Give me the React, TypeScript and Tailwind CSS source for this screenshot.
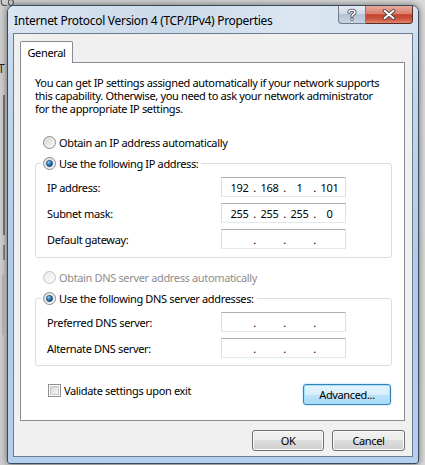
import React from "react";

function Radio({ checked, disabled }: { checked?: boolean; disabled?: boolean }) {
  const id = checked ? "c" : disabled ? "d" : "n";
  return (
    <svg width="13" height="13" viewBox="0 0 13 13" className="shrink-0">
      <defs>
        <linearGradient id={`rb-${id}`} x1="0" y1="0" x2="1" y2="1">
          <stop offset="0" stopColor={disabled ? "#e6e6e6" : "#cfcfcf"} />
          <stop offset="1" stopColor="#ffffff" />
        </linearGradient>
        <radialGradient id={`rd-${id}`} cx="0.35" cy="0.3" r="0.8">
          <stop offset="0" stopColor="#9fd4f5" />
          <stop offset="0.45" stopColor="#2f7fc4" />
          <stop offset="1" stopColor="#0e3c6b" />
        </radialGradient>
      </defs>
      <circle cx="6.5" cy="6.5" r="6" fill={`url(#rb-${id})`} stroke={disabled ? "#c2c2c2" : "#8a8a8a"} strokeWidth="1" />
      <circle cx="6.5" cy="6.5" r="4.6" fill="none" stroke={disabled ? "#f0f0f0" : "#f4f4f4"} strokeWidth="0.8" opacity="0.7" />
      {checked && <circle cx="6.5" cy="6.5" r="3.1" fill={`url(#rd-${id})`} stroke="#163e66" strokeWidth="0.7" />}
    </svg>
  );
}

function Checkbox() {
  return (
    <div className="flex h-[13px] w-[13px] shrink-0 items-center justify-center border border-[#8e8f8f] bg-white">
      <div className="h-[9px] w-[9px] border border-[#c8c8c8] bg-[linear-gradient(135deg,#d6d6d6,#f6f6f6)]" />
    </div>
  );
}

function IpBox({ v }: { v: string[] }) {
  return (
    <div className="flex h-[20px] w-[125px] items-center border border-[#dbdfe6] border-t-[#abadb3] border-b-[#e3e9ef] bg-white pl-[4px]">
      {v.map((s, i) => (
        <React.Fragment key={i}>
          <span className="w-[27px] text-center">{s}</span>
          {i < 3 && <span className="w-[3px] text-center">.</span>}
        </React.Fragment>
      ))}
    </div>
  );
}

function Row({ label, v }: { label: string; v: string[] }) {
  return (
    <div className="flex h-[20px] items-center pl-[11px]">
      <span className="w-[174px]">{label}</span>
      <IpBox v={v} />
    </div>
  );
}

function WinButton({ children, w, def }: { children: React.ReactNode; w: string; def?: boolean }) {
  return (
    <div
      className={
        def
          ? `${w} flex h-[21px] items-center justify-center rounded-[3px] border border-[#3c7fb1] bg-[linear-gradient(to_bottom,#e5f4fc_0%,#d6eefb_50%,#bde4f8_50%,#a9daf5_100%)] shadow-[inset_0_0_0_1px_#9ee3ff,0_0_2px_#7fd0ff]`
          : `${w} flex h-[21px] items-center justify-center rounded-[3px] border border-[#707070] bg-[linear-gradient(to_bottom,#f2f2f2_0%,#ebebeb_50%,#dddddd_50%,#cfcfcf_100%)] shadow-[inset_0_0_0_1px_#fbfbfb]`
      }
    >
      {children}
    </div>
  );
}

export default function App() {
  return (
    <div className="relative h-[465px] w-[425px] overflow-hidden whitespace-nowrap bg-[linear-gradient(to_right,#cfcfcf,#dadada)] font-['Noto_Sans',sans-serif] text-[11px] leading-[13px] tracking-[-0.35px] text-black">
      <div className="absolute left-0 top-[-5px] text-[12px] text-[#555] blur-[0.6px]">Co</div>
      <div className="absolute left-[-2px] top-[62px] text-[12px] text-[#222]">T</div>
      <div className="absolute left-[3px] top-[95px] h-[140px] w-[2px] border border-[#777]" />
      <div className="absolute left-[3px] top-[245px] h-[15px] w-[2px] border border-[#888]" />
      <div className="absolute left-[2px] top-[275px] h-[60px] w-[2px] border border-[#bbb]" />

      <div className="relative ml-[7px] mt-[5px] flex h-[459px] w-[412px] flex-col rounded-t-[7px] rounded-b-[3px] border border-[#3b4a5c] bg-[linear-gradient(to_bottom,#d3e1f0_0%,#c1d6ec_20%,#aecbea_60%,#b4d0ee_100%)] shadow-[0_0_7px_rgba(0,0,0,0.55)]">
        <div className="flex h-[27px] rounded-t-[6px] bg-[linear-gradient(to_right,#d9e5f1,#cbdaea_40%,#dbe6f2_70%,#d3e0ee)]">
          <div className="flex flex-1 items-center pl-[6px] pt-[1px] text-[12px] tracking-[-0.3px]">Internet Protocol Version 4 (TCP/IPv4) Properties</div>
          <div className="mr-[5px] flex h-[18px] self-start">
            <div className="flex w-[28px] items-center justify-center rounded-bl-[4px] border border-t-0 border-[#6e7b8b] bg-[linear-gradient(to_bottom,#e3eaf2_0%,#d0dbe7_45%,#b4c3d3_50%,#c6d4e2_100%)]">
              <svg width="12" height="13" viewBox="0 0 12 13">
                <path d="M3 4.2 C3 1.6 9 1.6 9 4.2 C9 6.2 6 6.2 6 8.2" fill="none" stroke="#3d4753" strokeWidth="3.2" strokeLinecap="round" />
                <path d="M3 4.2 C3 1.6 9 1.6 9 4.2 C9 6.2 6 6.2 6 8.2" fill="none" stroke="#ffffff" strokeWidth="1.6" strokeLinecap="round" />
                <circle cx="6" cy="11" r="1.7" fill="#3d4753" />
                <circle cx="6" cy="11" r="0.9" fill="#ffffff" />
              </svg>
            </div>
            <div className="flex w-[47px] items-center justify-center rounded-br-[4px] border border-l-0 border-t-0 border-[#5c2a26] bg-[linear-gradient(to_bottom,#e8a99c_0%,#d9806f_45%,#c2402c_52%,#cf5a44_80%,#e08a70_100%)]">
              <svg width="14" height="11" viewBox="0 0 14 11">
                <path d="M2.5 1.8 L11.5 9.2 M11.5 1.8 L2.5 9.2" fill="none" stroke="#3f3f3f" strokeWidth="3.6" strokeLinecap="round" />
                <path d="M2.5 1.8 L11.5 9.2 M11.5 1.8 L2.5 9.2" fill="none" stroke="#ffffff" strokeWidth="2" strokeLinecap="round" />
              </svg>
            </div>
          </div>
        </div>

        <div className="mx-[5px] flex h-[424px] flex-col border border-[#6b7c8f] bg-[#f0f0f0] pl-[6px] pr-[7px] pt-[7px]">
          <div className="flex">
            <div className="relative z-10 -mb-px flex h-[22px] w-[53px] items-center justify-center rounded-t-[2px] border border-b-0 border-[#898c95] bg-white pb-[1px]">
              General
            </div>
          </div>
          <div className="flex h-[359px] flex-col border border-[#898c95] bg-white">
            <div className="pl-[14px] pt-[13px]">
              <div>You can get IP settings assigned automatically if your network supports</div>
              <div>this capability. Otherwise, you need to ask your network administrator</div>
              <div>for the appropriate IP settings.</div>
            </div>
            <div className="ml-[22px] mt-[20px] flex h-[15px] items-center gap-[3px]">
              <Radio />
              <span>Obtain an IP address automatically</span>
            </div>
            <fieldset className="ml-[14px] mr-[12px] mt-[6px] rounded-[3px] border border-[#d5dfe5] px-0 pb-[8px]">
              <legend className="ml-[5px] flex h-[15px] items-center gap-[3px] pl-[2px] pr-[3px]">
                <Radio checked />
                <span>Use the following IP address:</span>
              </legend>
              <div className="flex flex-col gap-[6px] pt-[6px]">
                <Row label="IP address:" v={["192", "168", "1", "101"]} />
                <Row label="Subnet mask:" v={["255", "255", "255", "0"]} />
                <Row label="Default gateway:" v={["", "", "", ""]} />
              </div>
            </fieldset>
            <div className="ml-[22px] mt-[12px] flex h-[15px] items-center gap-[3px] text-[#8d8d8d]">
              <Radio disabled />
              <span>Obtain DNS server address automatically</span>
            </div>
            <fieldset className="ml-[14px] mr-[12px] mt-[6px] rounded-[3px] border border-[#d5dfe5] px-0 pb-[7px]">
              <legend className="ml-[5px] flex h-[15px] items-center gap-[3px] pl-[2px] pr-[3px]">
                <Radio checked />
                <span>Use the following DNS server addresses:</span>
              </legend>
              <div className="flex flex-col gap-[6px] pt-[6px]">
                <Row label="Preferred DNS server:" v={["", "", "", ""]} />
                <Row label="Alternate DNS server:" v={["", "", "", ""]} />
              </div>
            </fieldset>
            <div className="mt-[18px] flex items-start pl-[27px] pr-[13px]">
              <div className="flex h-[13px] items-center gap-[3px]">
                <Checkbox />
                <span>Validate settings upon exit</span>
              </div>
              <div className="flex-1" />
              <WinButton w="w-[88px]" def>
                Advanced...
              </WinButton>
            </div>
          </div>
          <div className="mt-[9px] flex justify-end gap-[8px]">
            <WinButton w="w-[72px]">OK</WinButton>
            <WinButton w="w-[73px]">Cancel</WinButton>
          </div>
        </div>
      </div>
    </div>
  );
}
